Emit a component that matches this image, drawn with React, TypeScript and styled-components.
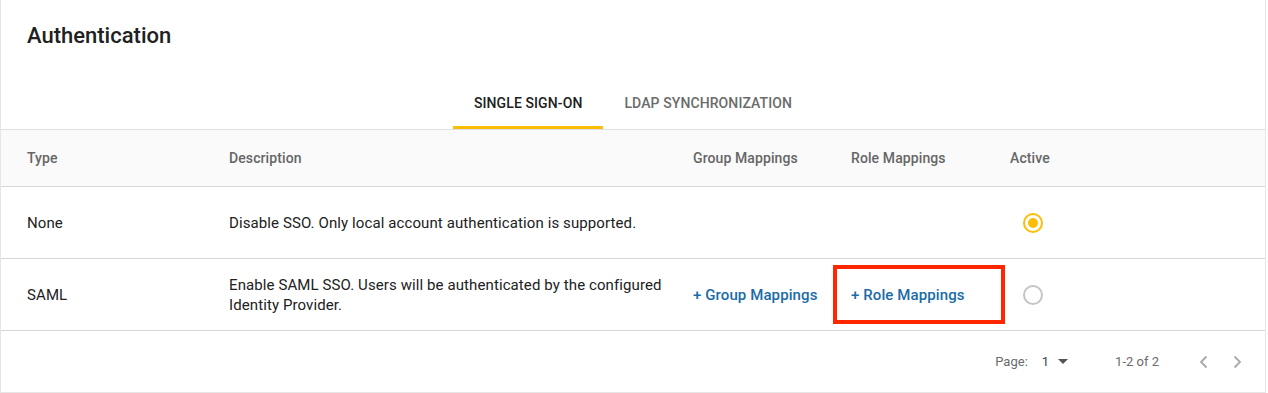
import React from 'react'
import styled, { createGlobalStyle } from 'styled-components';

const GlobalStyle = createGlobalStyle`
  body {
    margin: 0;
    background: #fff;
    font-family: Roboto, "Liberation Sans", Arial, sans-serif;
    color: #212121;
  }
`;

const Card = styled.div`
  width: 1266px;
  height: 393px;
  box-sizing: border-box;
  border: 1px solid #e6e6e6;
  border-top: none;
  display: flex;
  flex-direction: column;
  background: #fff;
`;

const Header = styled.div`
  display: flex;
  flex-direction: column;
  border-bottom: 1px solid #e0e0e0;
`;

const Title = styled.h1`
  margin: 0;
  padding: 23px 26px 0;
  font-size: 22px;
  font-weight: 500;
  line-height: 26px;
  color: #212121;
`;

const Tabs = styled.div`
  display: flex;
  justify-content: center;
  margin-top: 30px;
`;

const Tab = styled.div<{ $active?: boolean }>`
  height: 50px;
  box-sizing: border-box;
  padding: 0 21px;
  display: flex;
  align-items: center;
  font-size: 14px;
  font-weight: 500;
  letter-spacing: 0.1px;
  text-transform: uppercase;
  color: ${p => p.$active ? '#212121' : '#6b6b6b'};
  border-bottom: 3px solid ${p => p.$active ? '#fbbd08' : 'transparent'};
`;

const Row = styled.div<{ $head?: boolean }>`
  display: grid;
  grid-template-columns: 228px 464px 158px 159px 1fr;
  align-items: center;
  height: ${p => p.$head ? 56 : 71}px;
  background: ${p => p.$head ? '#fafafa' : '#fff'};
  border-bottom: 1px solid #d6d6d6;
  font-size: ${p => p.$head ? 14 : 15}px;
  letter-spacing: 0.1px;
  color: ${p => p.$head ? '#666' : '#212121'};
  font-weight: ${p => p.$head ? 500 : 400};
`;

const Cell = styled.div<{ $first?: boolean }>`
  position: relative;
  padding-left: ${p => p.$first ? 26 : 0}px;
  padding-right: 24px;
  line-height: 20px;
  height: 100%;
  display: flex;
  align-items: center;
`;

const ActiveCell = styled(Cell)`
  padding-left: 13px;
`;

const Link = styled.a`
  color: #1a6ca8;
  font-weight: 500;
  text-decoration: none;
  cursor: pointer;
`;

const Highlight = styled.div`
  position: absolute;
  top: 6px;
  bottom: 6px;
  left: -18px;
  right: 5px;
  border: 4px solid #ff2600;
  pointer-events: none;
`;

const Radio = styled.div<{ $checked?: boolean }>`
  width: 20px;
  height: 20px;
  box-sizing: border-box;
  border-radius: 50%;
  border: 2px solid ${p => p.$checked ? '#fbbd08' : '#c4c4c4'};
  display: flex;
  align-items: center;
  justify-content: center;

  &::after {
    content: '';
    display: ${p => p.$checked ? 'block' : 'none'};
    width: 10px;
    height: 10px;
    border-radius: 50%;
    background: #fbbd08;
  }
`;

const Footer = styled.div`
  flex: 1;
  display: flex;
  align-items: center;
  justify-content: flex-end;
  padding-right: 20px;
  font-size: 13px;
  color: #6b6b6b;
`;

const PageLabel = styled.span`
  margin-right: 14px;
`;

const PageSelect = styled.div`
  display: flex;
  align-items: center;
  gap: 7px;
  color: #444;
  margin-right: 47px;
`;

const Caret = styled.span`
  width: 0;
  height: 0;
  border-left: 5px solid transparent;
  border-right: 5px solid transparent;
  border-top: 5px solid #555;
  margin-left: 2px;
`;

const Range = styled.span`
  margin-right: 37px;
`;

const Nav = styled.div`
  display: flex;
  gap: 17px;
`;

const NavButton = styled.button`
  background: none;
  border: none;
  padding: 0;
  width: 16px;
  height: 16px;
  display: flex;
  align-items: center;
  justify-content: center;
`;

const Chevron = ({ dir }: { dir: 'left' | 'right' }) => (
  <svg width="16" height="16" viewBox="0 0 16 16">
    <path
      d={dir === 'left' ? 'M10.5 2.5 L5 8 L10.5 13.5' : 'M5.5 2.5 L11 8 L5.5 13.5'}
      fill="none"
      stroke="#a8a8a8"
      strokeWidth="1.8"
    />
  </svg>
);

const rows = [
  {
    type: 'None',
    description: 'Disable SSO. Only local account authentication is supported.',
    mappings: false,
    active: true,
  },
  {
    type: 'SAML',
    description: 'Enable SAML SSO. Users will be authenticated by the configured Identity Provider.',
    mappings: true,
    active: false,
  },
];

export default function App() {
  return (
    <>
      <GlobalStyle />
      <Card>
        <Header>
          <Title>Authentication</Title>
          <Tabs>
            <Tab $active>Single Sign-On</Tab>
            <Tab>LDAP Synchronization</Tab>
          </Tabs>
        </Header>

        <Row $head>
          <Cell $first>Type</Cell>
          <Cell>Description</Cell>
          <Cell>Group Mappings</Cell>
          <Cell>Role Mappings</Cell>
          <Cell>Active</Cell>
        </Row>

        {rows.map(r => (
          <Row key={r.type}>
            <Cell $first>{r.type}</Cell>
            <Cell>{r.description}</Cell>
            <Cell>{r.mappings && <Link>+ Group Mappings</Link>}</Cell>
            <Cell>
              {r.mappings && <Link>+ Role Mappings</Link>}
              {r.mappings && <Highlight />}
            </Cell>
            <ActiveCell><Radio $checked={r.active} /></ActiveCell>
          </Row>
        ))}

        <Footer>
          <PageLabel>Page:</PageLabel>
          <PageSelect>1 <Caret /></PageSelect>
          <Range>1-2 of 2</Range>
          <Nav>
            <NavButton><Chevron dir="left" /></NavButton>
            <NavButton><Chevron dir="right" /></NavButton>
          </Nav>
        </Footer>
      </Card>
    </>
  );
}
